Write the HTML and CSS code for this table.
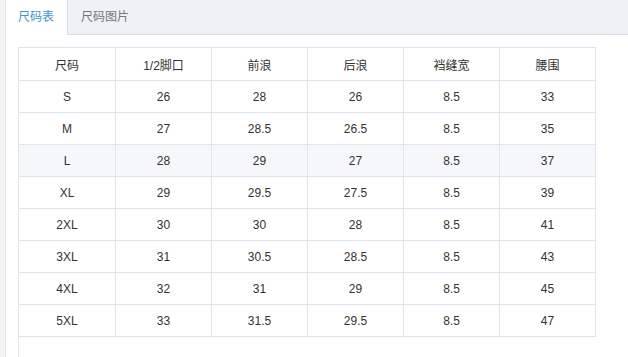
FILE: index.html
```html
<!DOCTYPE html>
<html lang="zh">
<head>
<meta charset="utf-8">
<link rel="stylesheet" href="styles.css">
</head>
<body>
<div class="page">
  <div class="tabs">
    <div class="tab active">尺码表</div>
    <div class="tab">尺码图片</div>
  </div>
  <div class="content">
    <div class="table-wrap">
      <table class="size-table">
        <thead>
          <tr><th>尺码</th><th>1/2脚口</th><th>前浪</th><th>后浪</th><th>裆缝宽</th><th>腰围</th></tr>
        </thead>
        <tbody>
          <tr><td>S</td><td>26</td><td>28</td><td>26</td><td>8.5</td><td>33</td></tr>
          <tr><td>M</td><td>27</td><td>28.5</td><td>26.5</td><td>8.5</td><td>35</td></tr>
          <tr class="hover"><td>L</td><td>28</td><td>29</td><td>27</td><td>8.5</td><td>37</td></tr>
          <tr><td>XL</td><td>29</td><td>29.5</td><td>27.5</td><td>8.5</td><td>39</td></tr>
          <tr><td>2XL</td><td>30</td><td>30</td><td>28</td><td>8.5</td><td>41</td></tr>
          <tr><td>3XL</td><td>31</td><td>30.5</td><td>28.5</td><td>8.5</td><td>43</td></tr>
          <tr><td>4XL</td><td>32</td><td>31</td><td>29</td><td>8.5</td><td>45</td></tr>
          <tr><td>5XL</td><td>33</td><td>31.5</td><td>29.5</td><td>8.5</td><td>47</td></tr>
        </tbody>
      </table>
    </div>
  </div>
</div>
</body>
</html>
```
FILE: styles.css
```css
html, body {
  margin: 0;
  padding: 0;
  background: #f4f5f7;
  height: 100%;
}
body {
  font-family: "Liberation Sans", "Noto Sans CJK SC", sans-serif;
  font-size: 12px;
  color: #333;
}
.page {
  margin-left: 5px;
  height: 100%;
  background: #fff;
  border-left: 1px solid #e2e5ea;
  display: flex;
  flex-direction: column;
}
.tabs {
  display: flex;
  height: 34px;
  background: #eef1f5;
  border-bottom: 1px solid #d9dee5;
  flex-shrink: 0;
}
.tab {
  height: 34px;
  line-height: 34px;
  padding: 0 13px;
  color: #777;
  font-size: 12px;
}
.tab.active {
  background: #fff;
  color: #3b96d2;
  border-right: 1px solid #d9dee5;
  height: 35px;
  padding: 0 12px;
  width: 37px;
}
.content {
  flex: 1;
  padding: 12px 0 0 12px;
  display: flex;
}
.table-wrap {
  flex: 1;
  border-left: 1px solid #e3e6eb;
}
.size-table {
  border-collapse: collapse;
  width: 578px;
  margin-left: -1px;
  table-layout: fixed;
}
.size-table th,
.size-table td {
  border: 1px solid #e1e4ea;
  text-align: center;
  font-weight: normal;
  height: 31px;
  padding: 0;
  color: #333;
}
.size-table th {
  height: 32px;
}
.size-table th:first-child,
.size-table td:first-child {
  width: 96px;
}
.size-table tr.hover td {
  background: #f6f7fa;
}
```
